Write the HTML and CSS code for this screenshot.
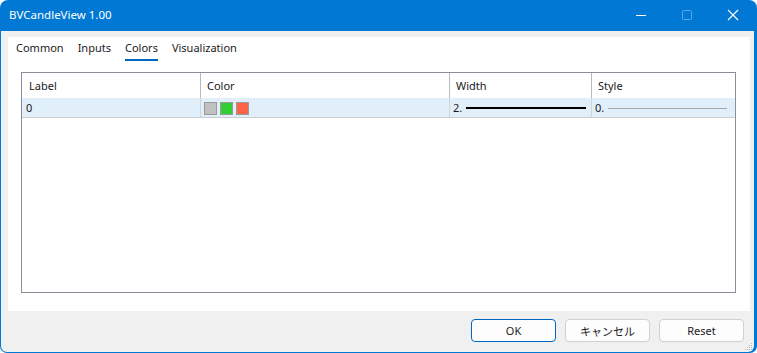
FILE: index.html
```html
<!DOCTYPE html>
<html lang="en">

<head>
    <meta charset="UTF-8">
    <meta name="viewport" content="width=device-width, initial-scale=1.0">
    <title>BVCandleView 1.00</title>
    <link rel="stylesheet" href="styles.css">
</head>

<body>
    <div class="window">
        <div class="titlebar">
            <span class="title">BVCandleView 1.00</span>
            <div class="caption-buttons">
                <span class="cap-btn">
                    <svg width="12" height="12" viewBox="0 0 12 12"><path d="M1 6.5h10" stroke="#fff" stroke-width="1"/></svg>
                </span>
                <span class="cap-btn disabled">
                    <svg width="12" height="12" viewBox="0 0 12 12"><rect x="1.5" y="1.5" width="9" height="9" rx="1" fill="none" stroke="#fff" stroke-width="1"/></svg>
                </span>
                <span class="cap-btn">
                    <svg width="12" height="12" viewBox="0 0 12 12"><path d="M1 1l10 10M11 1L1 11" stroke="#fff" stroke-width="1.1"/></svg>
                </span>
            </div>
        </div>

        <div class="content">
            <div class="panel">
                <div class="tabs">
                    <span class="tab">Common</span>
                    <span class="tab">Inputs</span>
                    <span class="tab active">Colors</span>
                    <span class="tab">Visualization</span>
                </div>

                <div class="grid">
                    <div class="row header">
                        <div class="cell">Label</div>
                        <div class="cell">Color</div>
                        <div class="cell">Width</div>
                        <div class="cell">Style</div>
                    </div>
                    <div class="row data">
                        <div class="cell">0</div>
                        <div class="cell swatches">
                            <span class="swatch gray"></span>
                            <span class="swatch green"></span>
                            <span class="swatch red"></span>
                        </div>
                        <div class="cell line-cell">
                            <span>2.</span>
                            <span class="line thick"></span>
                        </div>
                        <div class="cell line-cell">
                            <span>0.</span>
                            <span class="line thin"></span>
                        </div>
                    </div>
                </div>
            </div>

            <div class="footer">
                <button class="btn default">OK</button>
                <button class="btn">キャンセル</button>
                <button class="btn">Reset</button>
            </div>
        </div>

        <svg class="grip" width="8" height="8" viewBox="0 0 8 8">
            <rect x="6" y="0" width="1" height="1" fill="#bbb"/>
            <rect x="4" y="2" width="1" height="1" fill="#bbb"/>
            <rect x="6" y="2" width="1" height="1" fill="#bbb"/>
            <rect x="2" y="4" width="1" height="1" fill="#bbb"/>
            <rect x="4" y="4" width="1" height="1" fill="#bbb"/>
            <rect x="6" y="4" width="1" height="1" fill="#bbb"/>
            <rect x="0" y="6" width="1" height="1" fill="#bbb"/>
            <rect x="2" y="6" width="1" height="1" fill="#bbb"/>
            <rect x="4" y="6" width="1" height="1" fill="#bbb"/>
            <rect x="6" y="6" width="1" height="1" fill="#bbb"/>
        </svg>
    </div>
</body>

</html>
```

FILE: styles.css
```css
html,
body {
    margin: 0;
    padding: 0;
    background-color: #ffffff;
}

body {
    font-family: "Noto Sans", "Noto Sans CJK JP", sans-serif;
    font-size: 11px;
    color: #1a1a1a;
}

.window {
    position: relative;
    width: 757px;
    height: 353px;
    box-sizing: border-box;
    display: flex;
    flex-direction: column;
    background-color: #0078d4;
    border-radius: 8px 8px 7px 7px;
    overflow: hidden;
}

.titlebar {
    height: 31px;
    flex-shrink: 0;
    display: flex;
    align-items: center;
    justify-content: space-between;
    color: #ffffff;
    padding-left: 9px;
}

.title {
    font-size: 11.5px;
    margin-top: -2px;
}

.caption-buttons {
    display: flex;
    align-items: center;
    gap: 34px;
    padding-right: 18px;
    margin-top: -1px;
}

.cap-btn {
    display: flex;
    width: 12px;
    height: 12px;
}

.cap-btn.disabled {
    opacity: 0.35;
}

.content {
    flex: 1;
    display: flex;
    flex-direction: column;
    background-color: #f0f0f0;
    margin: 0 3px 1px 1px;
    padding: 6px 4px 0 7px;
    border-radius: 0 0 6px 6px;
}

.panel {
    height: 274px;
    background-color: #ffffff;
    display: flex;
    flex-direction: column;
}

.tabs {
    display: flex;
    gap: 14px;
    padding-left: 8px;
    padding-top: 3px;
}

.tab {
    line-height: 16px;
    padding-bottom: 3px;
    border-bottom: 2px solid transparent;
}

.tab.active {
    border-bottom-color: #0067c0;
}

.grid {
    margin: 11px 14px 0 13px;
    height: 221px;
    border: 1px solid #8c8f99;
    box-sizing: border-box;
}

.row {
    display: grid;
    grid-template-columns: 179px 249px 142px 1fr;
}

.row .cell {
    border-right: 1px solid #b9b9b9;
    display: flex;
    align-items: center;
    padding-left: 6px;
    white-space: nowrap;
}

.row .cell:last-child {
    border-right: none;
}

.header {
    height: 25px;
}

.header .cell:first-child {
    padding-left: 7px;
}

.data {
    height: 19px;
    background-color: #e1effb;
    border-bottom: 1px solid #cdcdcd;
}

.data .cell {
    padding-left: 4px;
    border-right-color: #d4d4d4;
}

.data .cell.swatches {
    padding-left: 3px;
    gap: 3px;
}

.swatch {
    width: 11px;
    height: 11px;
    border: 1px solid #9a9a9a;
    margin-top: 1px;
}

.swatch.gray {
    background-color: #c0c0c0;
}

.swatch.green {
    background-color: #32cd32;
}

.swatch.red {
    background-color: #ff6347;
}

.data .cell.line-cell {
    padding-left: 3px;
    padding-right: 5px;
    gap: 4px;
}

.data .cell.line-cell:last-child {
    padding-right: 8px;
}

.line {
    flex: 1;
    margin-top: 1px;
}

.line.thick {
    height: 2px;
    background-color: #000000;
}

.line.thin {
    height: 1px;
    background-color: #a8a8a8;
}

.footer {
    display: flex;
    justify-content: flex-end;
    gap: 9px;
    padding-top: 8px;
    padding-right: 6px;
}

.btn {
    width: 85px;
    height: 23px;
    font-family: inherit;
    font-size: 11px;
    color: #1a1a1a;
    background-color: #fdfdfd;
    border: 1px solid #d0d0d0;
    border-radius: 4px;
    padding: 0;
}

.btn.default {
    border-color: #0067c0;
}

.grip {
    position: absolute;
    right: 4px;
    bottom: 2px;
}
```
